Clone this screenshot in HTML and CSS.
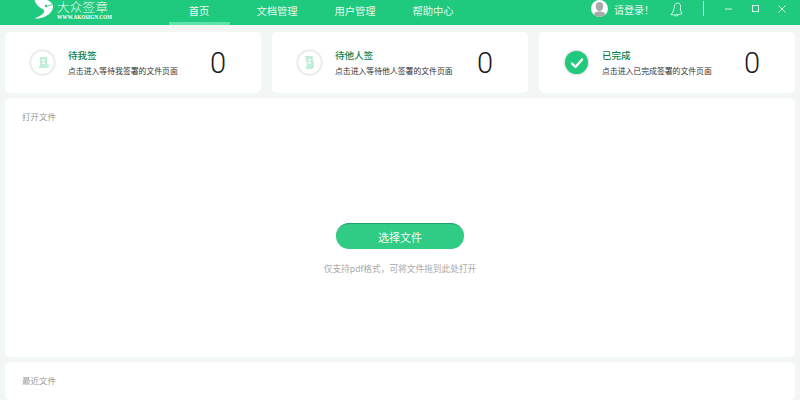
FILE: index.html
```html
<!DOCTYPE html>
<html lang="zh">
<head>
<meta charset="utf-8">
<title>大众签章</title>
<link rel="stylesheet" href="styles.css">
</head>
<body>
<header class="topbar">
  <div class="brand">
    <svg class="brand-mark" width="21" height="19" viewBox="0 0 21 19"><path fill="#fff" d="M0.500 0H13C16 1 18 3 19 5.500C19.500 10 16 14 12 16C8 18 4 18.800 0.500 18.500C4 17 8 15 9.500 13C11 11 10 9.500 7.500 8.500C4.500 7 1.500 4 0.500 0Z"/><circle cx="12" cy="6" r="1.200" fill="#1fc97e"/><path d="M12.500 6L19.500 4.500" stroke="#1fc97e" stroke-width="0.800" fill="none"/></svg>
    <div class="brand-text">
      <div class="brand-name">大众签章</div>
      <div class="brand-url">WWW.AKOSIGN.COM</div>
    </div>
  </div>
  <nav class="nav">
    <a class="nav-item active">首页</a>
    <a class="nav-item">文档管理</a>
    <a class="nav-item">用户管理</a>
    <a class="nav-item">帮助中心</a>
  </nav>
  <div class="user">
    <svg class="avatar" width="17" height="17" viewBox="0 0 17 17"><circle cx="8.500" cy="8.500" r="8.500" fill="#fff"/><clipPath id="av"><circle cx="8.500" cy="8.500" r="8.500"/></clipPath><g clip-path="url(#av)" fill="#a9a9a9"><ellipse cx="8.500" cy="6.500" rx="3.800" ry="4.500"/><path d="M2 17C2.500 12.500 5 11.500 8.500 11.500S14.500 12.500 15 17Z"/></g></svg>
    <span class="login">请登录！</span>
    <svg class="bell" width="13" height="15" viewBox="0 0 13 15"><path fill="none" stroke="#d6f5e6" stroke-width="1" d="M7.500 1C10 1 11 3 10.500 5.500C10.200 7.500 10.500 9.500 12 11.500C9 13 4.500 13.500 1 12.500C2.500 11 3.500 9 4 6.500C4.500 3.500 5 1 7.500 1ZM5 13C5.500 14.200 7 14.500 8 13"/></svg>
    <span class="divider"></span>
    <div class="winctl">
      <svg width="10" height="10" viewBox="0 0 10 10"><path d="M1 5H8" stroke="#d6f5e6" fill="none"/></svg>
      <svg width="10" height="10" viewBox="0 0 10 10"><rect x="1.500" y="1.500" width="6" height="6" stroke="#d6f5e6" fill="none"/></svg>
      <svg width="10" height="10" viewBox="0 0 10 10"><path d="M1.500 1.500L8.500 8.500M8.500 1.500L1.500 8.500" stroke="#d6f5e6" fill="none"/></svg>
    </div>
  </div>
</header>
<main class="content">
  <section class="cards">
    <div class="card">
      <span class="badge"><svg width="12" height="13" viewBox="0 0 12 13"><path fill="#c0efd9" d="M3 1H10V8.500H12V10C12 11 11.500 12 10 12H1.500V10.500H3ZM5 3.500V5H8V3.500ZM5 6.500V8H8V6.500Z"/></svg></span>
      <div class="card-text"><div class="card-title">待我签</div><div class="card-sub">点击进入等待我签署的文件页面</div></div>
      <div class="count">0</div>
    </div>
    <div class="card">
      <span class="badge"><svg width="13" height="15" viewBox="0 0 13 15"><path fill="#c0efd9" d="M2 1H10L9.500 3L11 8V11.500C11 13 10 14 9 14H3.500L3 12.500L4 9L2.500 4ZM5 4V5.500H8V4ZM5 7V8.500H8V7Z"/></svg></span>
      <div class="card-text"><div class="card-title">待他人签</div><div class="card-sub">点击进入等待他人签署的文件页面</div></div>
      <div class="count">0</div>
    </div>
    <div class="card">
      <span class="badge done"><svg width="14" height="12" viewBox="0 0 14 12"><path fill="none" stroke="#fff" stroke-width="2.400" stroke-linecap="round" stroke-linejoin="round" d="M2 6.500L5.500 10L12 2.500"/></svg></span>
      <div class="card-text"><div class="card-title">已完成</div><div class="card-sub">点击进入已完成签署的文件页面</div></div>
      <div class="count">0</div>
    </div>
  </section>
  <section class="panel open">
    <div class="panel-label">打开文件</div>
    <div class="drop">
      <button class="pick">选择文件</button>
      <p class="hint">仅支持pdf格式，可将文件拖到此处打开</p>
    </div>
  </section>
  <section class="panel recent">
    <div class="panel-label">最近文件</div>
  </section>
</main>
</body>
</html>
```
FILE: styles.css
```css
* { box-sizing: border-box; }
html, body { margin: 0; height: 400px; overflow: hidden; }
body {
  background: #f2f6f5;
  font-family: "Noto Sans CJK SC", "Liberation Sans", sans-serif;
  color: #333;
}
.topbar {
  height: 25px;
  background: #1fc97e;
  display: flex;
  color: #e4f8ee;
}
.brand {
  width: 160px;
  padding-left: 34px;
  display: flex;
  gap: 2px;
}
.brand-mark { flex: none; }
.brand-text { width: 60px; }
.brand-name {
  font-size: 12.500px;
  font-weight: 300;
  line-height: 14px;
  height: 14px;
  color: #f0fbf5;
  letter-spacing: 0.300px;
}
.brand-url {
  font-family: "Liberation Serif", serif;
  font-weight: bold;
  font-size: 5.200px;
  line-height: 7px;
  color: #fff;
  white-space: nowrap;
}
.nav { display: flex; }
.nav-item {
  position: relative;
  width: 78px;
  text-align: center;
  font-size: 10.300px;
  line-height: 21px;
}
.nav-item.active { color: #f0fbf5; height: 25px; }
.nav-item.active::after {
  content: "";
  position: absolute;
  left: 9px;
  right: 8px;
  bottom: 0;
  height: 3px;
  background: #5fe3ab;
}
.user {
  margin-left: auto;
  display: flex;
  align-items: flex-start;
  padding-right: 13px;
}
.login { font-size: 10px; line-height: 19px; margin-left: 6px; width: 39px; white-space: nowrap; }
.bell { margin: 2px 0 0 17px; }
.divider { width: 1px; height: 15px; margin: 1px 0 0 20px; background: #d6f5e6; }
.winctl { display: flex; gap: 16.500px; margin: 4px 0 0 20px; }
.content { padding: 7px 5px 0; }
.cards { display: flex; gap: 11px; }
.card {
  flex: 1;
  height: 61px;
  background: #fff;
  border-radius: 5px;
  display: flex;
  align-items: center;
  padding-left: 26px;
}
.badge {
  width: 23px;
  height: 23px;
  flex: none;
  border-radius: 50%;
  background: #fff;
  box-shadow: 0 0 3px rgba(0,0,0,.3);
  display: flex;
  align-items: center;
  justify-content: center;
}
.badge.done { background: #1fc97e; }
.card-text { margin-left: 14px; width: 132px; flex: none; white-space: nowrap; }
.card-title { font-size: 9.500px; font-weight: 500; line-height: 13px; color: #0a7f4c; }
.card-sub { font-size: 7.850px; line-height: 12px; margin-top: 3px; color: #333; }
.count {
  font-family: "Roboto", sans-serif;
  font-size: 29px;
  font-weight: 300;
  line-height: 32px;
  color: #1c1c1c;
  margin-left: 10px;
}
.panel { background: #fff; border-radius: 5px; margin-top: 5px; padding: 12px 17px; }
.panel-label { font-size: 8.500px; line-height: 12px; color: #999; }
.open { height: 259px; }
.drop { display: flex; flex-direction: column; align-items: center; margin-top: 101px; }
.pick {
  width: 128px;
  height: 26px;
  border: 0;
  border-top: 1px solid #1ba56b;
  border-radius: 13px;
  background: #30cb85;
  color: #f0fbf5;
  font: 11px/24px "Noto Sans CJK SC", sans-serif;
  padding: 0;
}
.hint { margin: 13px 0 0; font-size: 8.700px; line-height: 14px; color: #aaa; }
.recent { height: 38px; }
```
